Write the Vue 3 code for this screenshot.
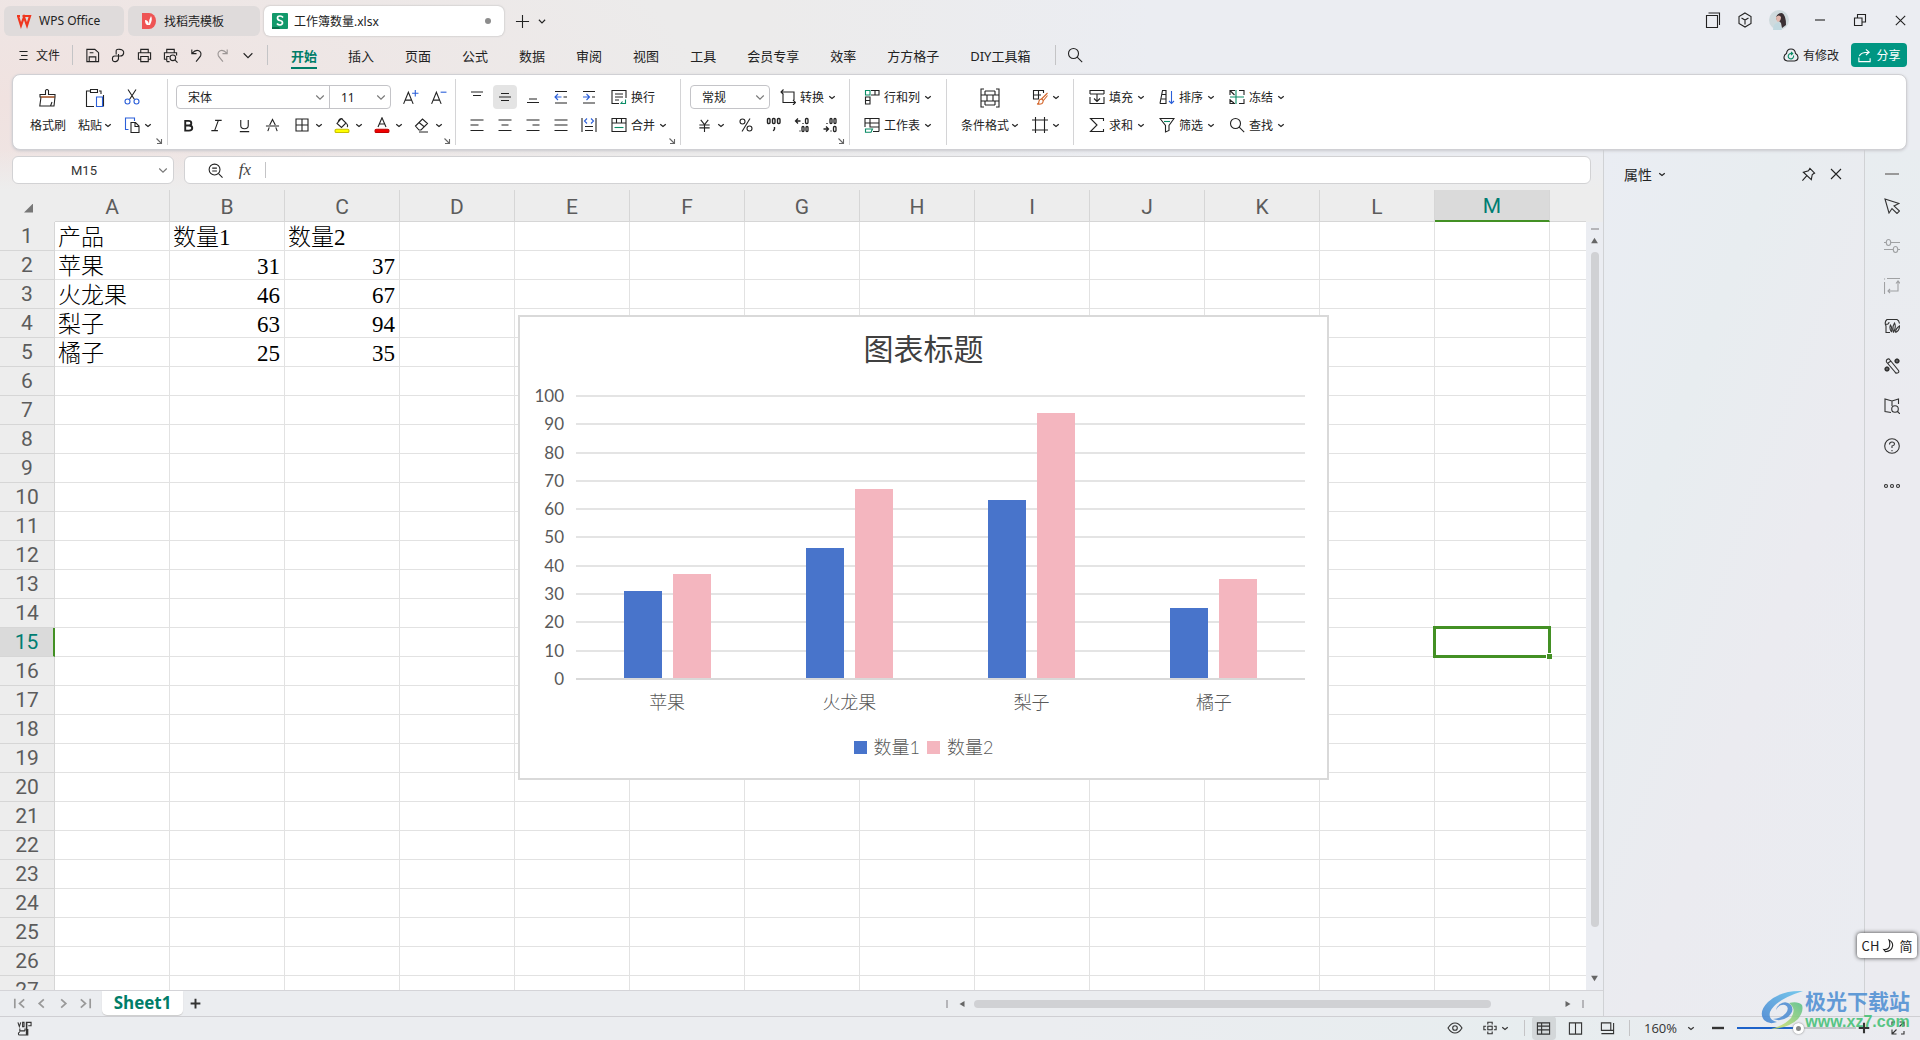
<script setup>
import { h, ref } from 'vue'

const shapes = {
  chevron: '<path d="M2.5 6.5 8 11l5.500-4.500" stroke-width="2.400"/>',
  thinChevron: '<path d="M3 6l5 5 5-5"/>',
  menu: '<path d="M3 3h10M5 8h8M3 13h10"/>',
  save: '<path d="M2 1.500h8.500L14.500 5v9.500h-3V9.500h-7v5H2zM5 5h4M11.500 14.500h-7"/>',
  pdf: '<path d="M5.500 7V3q0-2 4-1.500Q14 2 13.500 5.500 13 9 9 8.500M9 8.500H4Q1.500 8.500 1.500 11.500 1.500 15 5 14.500 8 14 8 11V6.500"/>',
  print: '<path d="M4 5V1.500h8V5M4 12H1.500V5h13v7H12M4 9h8v5.500H4z"/>',
  preview: '<path d="M4 5V1.500h8V5M4 12H1.500V5h13v3M4 14.500h3M4 14.500V9h3"/><circle cx="10.500" cy="10.500" r="3"/><path d="M13 13l2.500 2.500"/>',
  undo: '<path d="M3 1.500v4.500h5M3.500 5.500Q7 1.500 10.500 3q3 1.500 2 5-.5 1.500-5 6.500"/>',
  redo: '<path d="M13 1.500v4.500H8M12.500 5.500Q9 1.500 5.500 3 2.500 4.500 3.500 8q.5 1.500 5 6.500"/>',
  search: '<circle cx="6.500" cy="6.500" r="5"/><path d="M10.200 10.200l5 5"/>',
  plus: '<path d="M8 1v14M1 8h14"/>',
  windows: '<path d="M1.500 3.500h11v12h-11zM3.500 1h11v12"/>',
  cube: '<path d="M8 1l6 3.500v7L8 15l-6-3.500v-7zM4.500 6 8 8l3.500-2M8 8v4.500"/>',
  minimize: '<path d="M3 8h10"/>',
  restore: '<path d="M2.500 6h7.500v7.500H2.500zM5.500 6V2.500H13.500v7.500H10"/>',
  close: '<path d="M3 3l10 10M13 3 3 13"/>',
  cloud: '<path d="M4.500 14Q.7 13.500 1 10q.3-2.500 2.500-3.500Q4 2 8 2t4.500 4.500Q14.700 7.500 15 10q.3 3.500-3.500 4z"/><path stroke="#0a8c66" d="M10.500 8.500A2.700 2.700 0 1 1 8 6.500h1.500M8 5l1.700 1.500L8 8"/>',
  share: '<path d="M2 10v4.500h12V11M2.500 8.500Q4 4.500 12.500 4.500M9.500 1.500l3.500 3-3.500 3"/>',
  brush: '<path d="M2 6.500h5.500V2.500q1.500-2 3 0v4H17V9H2zM3 9 1.800 18H16l1-9M12.500 18l1.500-4"/><path stroke="#d4672c" d="M3 9h13.500"/>',
  paste: '<path d="M5 3H1.500v15.500H9M14 3h2v3M5.500 1.500h7v3h-7zM18.500 18.500V7"/><path stroke="#2b5fd9" d="M11.500 9h6v9.500h-6z"/>',
  cut: '<path d="M4 .5 10.500 10.500M12 .5 5.500 10.500"/><g stroke="#2b5fd9"><circle cx="3.500" cy="12.500" r="2.500"/><circle cx="12.500" cy="12.500" r="2.500"/></g>',
  copy: '<path stroke="#2b5fd9" d="M4.500 12.500h-3V1h9v3"/><path d="M7 5.500h4.500L15 9v6.500H7zM11 5.500v4h4"/>',
  growFont: '<path d="M1.500 14 6 3l4.500 11M3 10.500h6"/><path stroke="#2b5fd9" d="M12.500 1v6M9.500 4h6"/>',
  shrinkFont: '<path d="M1.500 14 6 3l4.500 11M3 10.500h6"/><path stroke="#2b5fd9" d="M10 3h5.500"/>',
  bold: '<path stroke-width="2" d="M4.500 3H8q3 0 3 2.500T8 8H4.500zM4.500 8h4q3.500 0 3.500 2.700T8.500 13.500h-4z"/>',
  italic: '<path d="M6.500 2.500h7M2.500 13.500h7M10 2.500 6 13.500"/>',
  underline: '<path d="M4 2v6q0 3.500 4 3.500T12 8V2M3 14.500h10"/>',
  strike: '<path d="M1 8.500h14M5 7.500 8 1.500l3 6M4.500 10 3 14M11.500 10l1.500 4"/>',
  borders: '<path d="M2 2h12v12H2zM8 2v12M2 8h12"/>',
  fill: '<path d="M7 2 3 6.500 7.500 10.500 12 6 8 2zM4 5.500Q5 1 8.500 1.500M12.500 6.500q2 2.500.5 3.500"/><rect x="1" y="12.200" width="14" height="3.400" rx="1.500" fill="#ffff00" stroke="#c9c000"/>',
  fontColor: '<path d="M4 10 8 .8 12 10M5.500 7h5"/><rect x="1" y="12.200" width="14" height="3.400" rx="1.500" fill="#f00000" stroke="#c00000"/>',
  eraser: '<path d="M1.500 9 8.500 2l5 4.500L7 13H5zM5 5.500l5.500 4.500M5 15h9"/>',
  top: '<path d="M2 3h12M4 6.500h8"/>',
  middle: '<path d="M4 4.500h8M2 8h12M4 11.500h8"/>',
  bottom: '<path d="M4 10h8M2 13.500h12"/>',
  outdent: '<path d="M2 2.500h12M2 14h12M10.500 8h3.500"/><path stroke="#2b5fd9" d="M8.500 8H2M5 5 2 8l3 3"/>',
  indent: '<path d="M2 2.500h12M2 14h12M11 8h3"/><path stroke="#2b5fd9" d="M2 8h6.500M5.500 5l3 3-3 3"/>',
  left: '<path d="M1.500 3h13M1.500 8h8M1.500 13.500h13"/>',
  center: '<path d="M1.500 3h13M4.500 8h7M1.500 13.500h13"/>',
  right: '<path d="M1.500 3h13M7.500 8h7M1.500 13.500h13"/>',
  justify: '<path d="M1.500 3h13M1.500 8h13M1.500 13.500h13"/>',
  distribute: '<path d="M1 1v14M15 1v14M4 9.500h8M4 13.500h8"/><path stroke="#2b5fd9" d="M6 1.500 3.500 4 6 6.500M10 1.500 12.500 4 10 6.500"/>',
  wrap: '<path d="M8 14.500H1V1.500h14V9M4 5h8M4 8h8M4 11h4"/><path stroke="#0a8c66" d="M14.500 10.500v4H10l1.500-2"/>',
  merge: '<path d="M1 1.500h14v13H1zM1 6h14M5.500 1.500V6M10.500 1.500V6"/><path stroke="#0a8c66" d="M3.500 10.500h9"/>',
  convert: '<path d="M3 5V13.500h12M13 11l2.500 2.500L13 16M14 11V3H1M3.500.5 1 3l2.500 2.500"/>',
  yen: '<path d="M4 2 8 7l4-5M2.500 7.500h11M2.500 10.500h11M8 7v8"/>',
  percent: '<circle cx="4.500" cy="4.500" r="2.500"/><circle cx="11.500" cy="11.500" r="2.500"/><path d="M12 1.500 4 14.500"/>',
  thousands: '<g stroke-width="1.400"><rect x="1.500" y="1.500" width="2.500" height="5" rx="1"/><rect x="6.500" y="1.500" width="2.500" height="5" rx="1"/><rect x="11.500" y="1.500" width="2.500" height="5" rx="1"/><path d="M8.500 10v2l-1.200 2"/></g>',
  addDecimal: '<g stroke-width="1.300"><path d="M6.500 4H1.500M4 1.500 1.500 4 4 6.500M9 6v1M6 13.500v1"/><rect x="11.500" y="1.500" width="2.500" height="5" rx="1"/><rect x="8" y="9.500" width="2" height="5" rx="1"/><rect x="12" y="9.500" width="2" height="5" rx="1"/></g>',
  cutDecimal: '<g stroke-width="1.300"><path d="M1.500 12h5M4 9.500 6.500 12 4 14.500M9 13.500v1M5 6v1"/><rect x="11.500" y="9.500" width="2.500" height="5" rx="1"/><rect x="8" y="1.500" width="2" height="5" rx="1"/><rect x="12" y="1.500" width="2" height="5" rx="1"/></g>',
  rowsCols: '<path d="M7 1.500h8V6H7M11 1.500V6M1.500 8h4.500v7H1.500zM1.500 11.500H6"/><path stroke="#0a8c66" d="M1.500 1.500h4.500V6H1.500z"/>',
  worksheet: '<path d="M15 14.500H9M1 10V1.500h14v13M1 6h14M6 1.500v9M6 10h9"/><path stroke="#0a8c66" d="M1.500 12h7L7 15.200H1.500z"/>',
  conditional: '<path d="M4 1H1v18h3M16 1h3v18h-3M1 7h4M1 13h6M15 7h4M13 13h6M5 3h10M5 3v4h10V3M7 7v6M13 7v6M5 17h10M5 17v-4h10v4"/>',
  tableStyle: '<path d="M7 10H1.500V1.500h10V4M1.500 6H9M6.500 1.500V10"/><path stroke="#d4672c" d="M15.500 4 9.500 10M15.500 6.500 11 12M5 15q2 0 2-3 1-2.500 3.500-1.500 1.500 2-.5 4-1.500 1-5 .5z"/>',
  frame: '<path d="M3.500 0v16M12.500 0v16M0 3h16M0 13h16"/>',
  fillDown: '<path d="M5 14.500H1V8M11 14.500h4V8M1 5V1.500h14V5M1 5h14M8 5.500V12M5 9.500 8 12.500l3-3M1 14.500h14"/>',
  sort: '<path d="M1 14.500 3.500 1.500H7v13H1M3 5.500h4M2.500 10H7"/><path stroke="#2b5fd9" d="M12.500 2v12.500M10 12l2.500 2.500L15 12"/>',
  freeze: '<path d="M6 1.500H1V6M10 1.500h5V6M1 10v4.500h5M10 14.500h5V10M1.500 2l4 4M1 11l4 3"/><path stroke="#0a8c66" d="M7 1v14M1 8h14"/>',
  sum: '<path d="M14.500 4V1.500h-13L8 8l-6.500 6.500h13V12"/>',
  filter: '<path d="M1 1.500h14L10 8.500v5L6.500 15V8.500z"/><path stroke="#0a8c66" d="M5 4.500h6"/>',
  launcher: '<path d="M3 3l9 9M13 4v9H4" stroke-width="2.200"/>',
  zoomText: '<circle cx="7" cy="7" r="5.800"/><path d="M11.500 11.500 15.500 15.500M4.500 5.500h5M4.500 8.500h5"/>',
  pin: '<path d="M9.500 1.500 14.500 6.500 12 8l-1 5.500L2.500 5.500 8 4zM6 9.500 1.500 14.500"/>',
  cursor: '<path d="M1 1l14 4.500L10 8l5.500 5L13 15.500 8 10.500 5 15z"/>',
  sliders: '<path d="M0 4.500h2M6.500 4.500H16M0 11.500h9M14 11.500h2"/><ellipse cx="4.500" cy="4.500" rx="2.200" ry="3"/><ellipse cx="11.500" cy="11.500" rx="2.200" ry="3"/>',
  swap: '<path d="M.5 4v12M3 .5h13M14 3.500V13H4M12 5.500l2-2.500 2 2.500M6 11l-2 2 2 2M.5.500v1"/>',
  skin: '<path d="M6 14.500H2V8Q0 4 3 1.500h10q2 1 2.500 4M1 6q4 1 4-2"/><path d="M7.500 14Q5 10 6.500 7 8.500 10 7.500 14M9.500 14.500Q8 9 10.500 5q2 4-1 9.500M11.500 14.500q0-4 4-6.500 0 5-4 6.500"/>',
  wand: '<path d="M3 1.500q2-1.500 3 .5l8.500 10.500q1 2-1 2.500T11 14L2.500 4Q2 2.500 3 1.500zM4 5l3-2"/><circle cx="13" cy="3" r="1.700" stroke-width="1.600"/><circle cx="3" cy="11" r="1.700" stroke-width="1.600"/><path d="M13 .5v5M10.500 3h5M3 8.500v5M.5 11h5" stroke-width=".8"/>',
  book: '<path d="M7 14.500 1 13.500V1l7 2 6.500-2v5M8 3v5"/><circle cx="11" cy="11" r="3.300"/><path d="M13.500 13.500 16 16"/>',
  help: '<circle cx="8" cy="8" r="7.300"/><path d="M5.500 6.500q0-2.500 2.500-2.500t2.500 2Q10.500 7.500 8 8v2M8 12v1.300"/>',
  more: '<circle cx="2" cy="8" r="1.500"/><circle cx="8" cy="8" r="1.500"/><circle cx="14" cy="8" r="1.500"/>',
  first: '<path d="M3 3v10M13 3.500 8 8l5 4.500" stroke-width="1.800"/>',
  prev: '<path d="M10.500 3.500 5.500 8l5 4.500" stroke-width="1.800"/>',
  next: '<path d="M5.500 3.500l5 4.500-5 4.500" stroke-width="1.800"/>',
  last: '<path d="M13 3v10M3 3.500 8 8l-5 4.500" stroke-width="1.800"/>',
  script: '<path d="M1 1.500 2.500 6 4 1.500M6 1.500h1.500v4.500H6zM10 15V1.500h5V5h-3M10.500 1.500V14M2.500 10.500h6M3 8v3.500M3 12q-1.500 0-1.500 1.500T3 15h8.500V8.500M8.500 8v2.500"/>',
  eye: '<path d="M1 8Q4 3 8 3t7 5q-3 5-7 5T1 8z"/><circle cx="8" cy="8" r="2.300"/>',
  cross: '<rect x="5.500" y="6" width="5" height="4"/><path d="M5.500 4V1.500h5V4M5.500 12v2.500h5V12M3.500 6H1v4h2.500M12.500 6H15v4h-2.500"/>',
  grid: '<path d="M1.500 2h13v12h-13zM1.500 5.500h13M1.500 9.500h13M6 2v12"/>',
  pages: '<path d="M1.500 2h13v12h-13zM8 2v12"/>',
  pageBreak: '<path d="M1.500 2h10v8h-10zM14.500 2v11.500H1.500M11.500 10h3"/>',
  minus: '<path d="M2 8h12" stroke-width="2.400"/>',
  boldPlus: '<path d="M8 2v12M2 8h12" stroke-width="2.400"/>',
  expand: '<path d="M9.500 2H14v4.500M14 2 9.500 6.500M6.500 14H2V9.500M2 14l4.500-4.500M2 5V2h3M14 11v3h-3"/>',
  moon: '<path d="M8 1q5 3 4 7.500Q11 14 4 14.500L2 12q5 .5 6.500-3.500Q9.500 5 8 1z"/>',
  triangle: '<path d="M8 3l6 10H2z" fill="currentColor" stroke="none"/>',
}
const Icon = ({ name, size = 16, box = 16 }) =>
  h('svg', {
    class: 'icon', width: size, height: size, viewBox: `0 0 ${box} ${box}`,
    fill: 'none', stroke: 'currentColor', 'stroke-width': box / size * 1.1,
    'aria-hidden': 'true', innerHTML: shapes[name],
  })
Icon.props = ['name', 'size', 'box']

const quick = ['save', 'pdf', 'print', 'preview', 'undo', 'redo', 'thinChevron']
const menus = ['开始', '插入', '页面', '公式', '数据', '审阅', '视图', '工具', '会员专享', '效率', '方方格子', 'DIY工具箱']
const railIcons = ['cursor', 'sliders', 'swap', 'skin', 'wand', 'book', 'help', 'more']
const columns = ['A', 'B', 'C', 'D', 'E', 'F', 'G', 'H', 'I', 'J', 'K', 'L', 'M']
const editTools = [
  [['fillDown', '填充'], ['sum', '求和']],
  [['sort', '排序'], ['filter', '筛选']],
  [['freeze', '冻结'], ['search', '查找']],
]
const series = ['数量1', '数量2']
const data = [
  { name: '苹果', values: [31, 37] },
  { name: '火龙果', values: [46, 67] },
  { name: '梨子', values: [63, 94] },
  { name: '橘子', values: [25, 35] },
]
const cells = [['产品', ...series], ...data.map((d) => [d.name, ...d.values])]
const ticks = [100, 90, 80, 70, 60, 50, 40, 30, 20, 10, 0]
const zoom = ref(52)
</script>

<template>
  <div class="app">
    <header class="titlebar">
      <button class="doc home">
        <svg class="icon" width="16" height="16" viewBox="0 0 16 16" fill="none" stroke="#f0371f" stroke-width="2.200"><path d="M1 3h3M2 3l3 9.500L8 4l3 8.500L14 3H6.500" /></svg>
        WPS Office
      </button>
      <button class="doc template">
        <svg class="icon" width="16" height="16" viewBox="0 0 16 16"><path d="M1 0h7a7 8 0 0 1 0 16H1z" fill="#ee5454" /><path d="M4 7q3 0 4 4 0-5 2-8 2 3-1 9H6q-2-1-2-5z" fill="#fff" /></svg>
        找稻壳模板
      </button>
      <button class="doc current">
        <svg class="icon" width="16" height="16" viewBox="0 0 16 16"><rect width="16" height="16" rx="1" fill="#12996b" /><path d="M0 14h7l1 2H0z" fill="#06704b" /><path d="M11 4.500Q10 3 8 3 5.500 3 5.500 5T8 7.500t2.500 2.300T8 12Q6 12 5 10.500" stroke="#fff" stroke-width="1.700" fill="none" /></svg>
        <span>工作簿数量.xlsx</span>
        <i class="unsaved"></i>
      </button>
      <button class="plain" aria-label="新建"><Icon name="plus" :size="15" /></button>
      <button class="plain slim" aria-label="标签列表"><Icon name="thinChevron" :size="10" /></button>
      <div class="window-tools">
        <button class="plain" aria-label="窗口"><Icon name="windows" /></button>
        <button class="plain" aria-label="应用"><Icon name="cube" /></button>
        <svg class="avatar" width="20" height="20" viewBox="0 0 20 20"><circle cx="10" cy="10" r="10" fill="#cfdadd" /><path d="M7 9q0-6 6-6 4 2 4 12l-4 3-1-5-2-2z" fill="#3a3034" /><path d="M7 7q3-3 5 0 0 4-3 5-2-1-2-5z" fill="#e2b8ad" /><path d="M4 20q0-7 6-8l3 8z" fill="#c2d9e0" /></svg>
        <button class="plain wide" aria-label="最小化"><Icon name="minimize" /></button>
        <button class="plain wide" aria-label="还原"><Icon name="restore" /></button>
        <button class="plain wide" aria-label="关闭"><Icon name="close" :size="15" /></button>
      </div>
    </header>

    <nav class="menubar">
      <button class="file"><Icon name="menu" :size="13" />文件</button>
      <i class="rule"></i>
      <div class="quick">
        <button v-for="q in quick" :key="q" class="plain" :class="{ faded: q === 'redo' }" :aria-label="q"><Icon :name="q" :size="q === 'thinChevron' ? 14 : 15" /></button>
      </div>
      <i class="rule"></i>
      <div class="menus">
        <a v-for="(m, i) in menus" :key="m" href="#" :class="{ on: i === 0 }">{{ m }}</a>
      </div>
      <i class="rule"></i>
      <button class="plain find" aria-label="搜索"><Icon name="search" /></button>
      <div class="menu-end">
        <button class="sync"><Icon name="cloud" />有修改</button>
        <button class="share"><Icon name="share" :size="15" />分享</button>
      </div>
    </nav>

    <section class="ribbon">
      <div class="group clipboard">
        <button class="big"><Icon name="brush" :size="20" :box="20" /><span>格式刷</span></button>
        <button class="big"><Icon name="paste" :size="20" :box="20" /><span>粘贴<Icon name="chevron" :size="8" /></span></button>
        <div class="stack">
          <button class="tool cut" aria-label="剪切"><Icon name="cut" /></button>
          <button class="label" aria-label="复制"><Icon name="copy" /><Icon name="chevron" :size="8" /></button>
        </div>
        <Icon class="launcher" name="launcher" :size="8" />
      </div>

      <div class="group font">
        <div class="stack">
          <div class="line">
            <div class="combo">
              <span class="pick family"><select aria-label="字体"><option>宋体</option></select><Icon name="thinChevron" :size="12" /></span>
              <span class="pick size"><select aria-label="字号"><option>11</option></select><Icon name="thinChevron" :size="12" /></span>
            </div>
            <button class="tool" aria-label="增大字号"><Icon name="growFont" :size="17" /></button>
            <button class="tool" aria-label="减小字号"><Icon name="shrinkFont" :size="17" /></button>
          </div>
          <div class="line">
            <button v-for="t in ['bold', 'italic', 'underline', 'strike']" :key="t" class="tool" :aria-label="t"><Icon :name="t" :size="15" /></button>
            <button v-for="t in ['borders', 'fill', 'fontColor', 'eraser']" :key="t" class="split" :aria-label="t"><Icon :name="t" /><Icon name="chevron" :size="8" /></button>
          </div>
        </div>
        <Icon class="launcher" name="launcher" :size="8" />
      </div>

      <div class="group align">
        <div class="stack">
          <div class="line">
            <button v-for="t in ['top', 'middle', 'bottom', 'outdent', 'indent']" :key="t" class="tool" :class="{ pressed: t === 'middle' }" :aria-label="t"><Icon :name="t" /></button>
            <button class="label"><Icon name="wrap" />换行</button>
          </div>
          <div class="line">
            <button v-for="t in ['left', 'center', 'right', 'justify', 'distribute']" :key="t" class="tool" :aria-label="t"><Icon :name="t" /></button>
            <button class="label"><Icon name="merge" />合并<Icon name="chevron" :size="8" /></button>
          </div>
        </div>
        <Icon class="launcher" name="launcher" :size="8" />
      </div>

      <div class="group number">
        <div class="stack">
          <div class="line">
            <div class="combo"><span class="pick format"><select aria-label="数字格式"><option>常规</option></select><Icon name="thinChevron" :size="12" /></span></div>
            <button class="label"><Icon name="convert" />转换<Icon name="chevron" :size="8" /></button>
          </div>
          <div class="line">
            <button class="split currency" aria-label="货币"><Icon name="yen" :size="15" /><Icon name="chevron" :size="8" /></button>
            <button v-for="t in ['percent', 'thousands', 'addDecimal', 'cutDecimal']" :key="t" class="tool" :aria-label="t"><Icon :name="t" /></button>
          </div>
        </div>
        <Icon class="launcher" name="launcher" :size="8" />
      </div>

      <div class="group cells">
        <div class="stack">
          <button class="label"><Icon name="rowsCols" />行和列<Icon name="chevron" :size="8" /></button>
          <button class="label"><Icon name="worksheet" />工作表<Icon name="chevron" :size="8" /></button>
        </div>
      </div>

      <div class="group styles">
        <button class="big"><Icon name="conditional" :size="20" :box="20" /><span>条件格式<Icon name="chevron" :size="8" /></span></button>
        <div class="stack">
          <button class="label" aria-label="表格样式"><Icon name="tableStyle" /><Icon name="chevron" :size="8" /></button>
          <button class="label" aria-label="单元格样式"><Icon name="frame" /><Icon name="chevron" :size="8" /></button>
        </div>
      </div>

      <div class="group edit">
        <div v-for="(col, i) in editTools" :key="i" class="stack">
          <button v-for="[icon, text] in col" :key="text" class="label"><Icon :name="icon" />{{ text }}<Icon name="chevron" :size="8" /></button>
        </div>
      </div>
    </section>

    <div class="work">
      <main class="book">
        <div class="formula">
          <div class="field name"><input value="M15" aria-label="名称框"><button class="plain slim" aria-label="名称列表"><Icon name="thinChevron" :size="12" /></button></div>
          <div class="field entry">
            <button class="plain" aria-label="缩放"><Icon name="zoomText" :size="15" /></button>
            <button class="plain fx" aria-label="插入函数"><i>fx</i></button>
            <i class="rule"></i>
            <input value="" aria-label="编辑栏">
          </div>
        </div>

        <div class="sheet">
          <div class="viewport">
            <table>
              <colgroup><col class="c-head"><col v-for="c in columns" :key="c" class="c-cell"><col></colgroup>
              <thead>
                <tr>
                  <th class="corner"><i></i></th>
                  <th v-for="c in columns" :key="c" :class="{ picked: c === 'M' }">{{ c }}</th>
                  <th></th>
                </tr>
              </thead>
              <tbody>
                <tr v-for="r in 27" :key="r">
                  <th :class="{ picked: r === 15 }">{{ r }}</th>
                  <td v-for="(c, i) in columns" :key="c" :class="{ num: r > 1 && i > 0 }">{{ cells[r - 1]?.[i] }}<i v-if="r === 15 && c === 'M'" class="selection"></i></td>
                  <td></td>
                </tr>
              </tbody>
            </table>

            <figure class="chart">
              <figcaption>图表标题</figcaption>
              <div class="plot-row">
                <div class="axis"><span v-for="t in ticks" :key="t">{{ t }}</span></div>
                <div class="plot">
                  <div class="lines"><i v-for="t in ticks" :key="t"></i></div>
                  <div class="bars">
                    <div v-for="d in data" :key="d.name" class="pair">
                      <b v-for="(v, i) in d.values" :key="i" :class="'s' + i" :style="{ height: v + '%' }"></b>
                    </div>
                  </div>
                </div>
              </div>
              <div class="categories"><span v-for="d in data" :key="d.name">{{ d.name }}</span></div>
              <div class="legend"><span v-for="(s, i) in series" :key="s"><b :class="'s' + i"></b>{{ s }}</span></div>
            </figure>
          </div>
          <div class="vscroll">
            <i class="grip"></i>
            <Icon name="triangle" :size="9" />
            <div class="vtrack"><i></i></div>
            <Icon class="down" name="triangle" :size="9" />
          </div>
        </div>

        <div class="tabs">
          <div class="pager">
            <button v-for="p in ['first', 'prev', 'next', 'last']" :key="p" class="plain" :aria-label="p"><Icon :name="p" :size="15" /></button>
          </div>
          <button class="sheet-tab">Sheet1</button>
          <button class="plain add" aria-label="新建工作表"><Icon name="boldPlus" :size="13" /></button>
          <div class="hscroll">
            <i class="grip"></i>
            <Icon class="west" name="triangle" :size="8" />
            <div class="htrack"><i></i></div>
            <Icon class="east" name="triangle" :size="8" />
            <i class="grip"></i>
          </div>
        </div>
      </main>

      <aside class="pane">
        <button class="pane-title">属性<Icon name="chevron" :size="8" /></button>
        <button class="plain" aria-label="固定"><Icon name="pin" :size="15" /></button>
        <button class="plain" aria-label="关闭"><Icon name="close" /></button>
      </aside>
      <aside class="rail">
        <button class="plain handle" aria-label="收起"><i></i></button>
        <button v-for="r in railIcons" :key="r" class="plain" :class="{ faded: r === 'sliders' || r === 'swap' }" :aria-label="r"><Icon :name="r" /></button>
      </aside>
    </div>

    <footer class="status">
      <button class="plain macro" aria-label="宏"><Icon name="script" :size="15" /></button>
      <button class="plain" aria-label="护眼"><Icon name="eye" /></button>
      <button class="label" aria-label="阅读模式"><Icon name="cross" :size="14" /><Icon name="chevron" :size="8" /></button>
      <i class="rule"></i>
      <div class="views">
        <button class="plain active" aria-label="普通视图"><Icon name="grid" :size="15" /></button>
        <button class="plain" aria-label="页面布局"><Icon name="pages" :size="15" /></button>
        <button class="plain" aria-label="分页预览"><Icon name="pageBreak" :size="15" /></button>
      </div>
      <i class="rule"></i>
      <button class="percent">160%<Icon name="chevron" :size="8" /></button>
      <button class="plain slim" aria-label="缩小"><Icon name="minus" /></button>
      <input v-model="zoom" class="zoom" type="range" aria-label="缩放比例">
      <button class="plain slim" aria-label="放大"><Icon name="boldPlus" :size="14" /></button>
      <button class="plain full" aria-label="全屏"><Icon name="expand" /></button>
    </footer>

    <div class="ime">CH <Icon name="moon" :size="14" /> 简</div>
    <div class="mark">
      <svg width="43" height="40" viewBox="0 0 43 40">
        <defs>
          <linearGradient id="sky" x1="0" y1="1" x2="1" y2="0"><stop offset="0" stop-color="#3f7fd0" /><stop offset="1" stop-color="#63c3ec" /></linearGradient>
          <linearGradient id="leaf" x1="0" y1="1" x2="1" y2="0"><stop offset="0" stop-color="#dbe36a" /><stop offset="1" stop-color="#52bf86" /></linearGradient>
        </defs>
        <path d="M42 1Q20 0 7 12-3 22 3 30q5 5 13 2-9-2-7-10Q14 10 42 1z" fill="url(#sky)" />
        <path d="M15 20q3-6 9-5 5 2 1 8-5 6-13 6 8 3 15-2 7-6 3-12-5-5-11-1-3 2-4 6z" fill="#4b8bd2" />
        <path d="M28 13q9-2 13 2 2 6-4 14-9 9-27 10 14-4 20-11 6-9-2-15z" fill="url(#leaf)" />
      </svg>
      <div><strong>极光下载站</strong><span>www.xz7.com</span></div>
    </div>
  </div>
</template>

<style>
body { margin: 0; }
</style>

<style scoped>
.app {
  position: relative;
  display: flex;
  flex-direction: column;
  height: 100vh;
  overflow: hidden;
  font: 12px "Noto Sans", "Noto Sans CJK SC", sans-serif;
  color: #222;
  background:
    radial-gradient(ellipse 700px 260px at 0 100px, #f0e2e0, transparent),
    linear-gradient(90deg, #ecebeb 40%, #ebedf2 60%);
}
.app *, .app { box-sizing: border-box; }
.icon { flex: none; display: block; }
button { padding: 0; border: 0; background: none; font: inherit; color: inherit; white-space: nowrap; }
input, select { min-width: 0; padding: 0; border: 0; outline: 0; background: none; font: inherit; color: inherit; }
.plain { display: flex; align-items: center; justify-content: center; width: 26px; height: 24px; }
.plain.slim { width: 16px; }
.faded { opacity: .4; }
.rule { flex: none; width: 1px; height: 16px; background: #c4c4c6; }

.titlebar { display: flex; align-items: center; gap: 4px; height: 40px; padding: 2px 0 0 4px; }
.doc { display: flex; align-items: center; gap: 7px; height: 30px; padding-bottom: 1px; border-radius: 6px; background: #dfdbdb; text-align: left; }
.home { width: 120px; padding-left: 12px; }
.template { width: 132px; padding-left: 13px; }
.current { width: 240px; padding: 0 13px 1px 8px; gap: 6px; background: #fff; box-shadow: 0 0 2px #aaa; }
.unsaved { width: 6px; height: 6px; margin-left: auto; border-radius: 50%; background: #8c8c8c; }
.titlebar > .plain { margin-left: 1px; }
.titlebar > .slim { margin-left: -5px; }
.window-tools { display: flex; align-items: center; gap: 6px; margin-left: auto; padding-bottom: 2px; }
.window-tools .wide { width: 40px; margin-right: -6px; }
.window-tools .plain:nth-child(4) { margin-left: 5px; }
.window-tools .plain:last-child { margin-right: 0; }
.avatar { margin: 0 0 0 5px; }

.menubar { display: flex; align-items: center; height: 34px; padding: 0 13px 4px 17px; }
.menubar .rule { height: 20px; background: #c4c4c6; }
.file { display: flex; align-items: center; gap: 6px; margin-right: 12px; }
.quick { display: flex; margin: 0 6px; }
.menus { display: flex; gap: 31px; margin: 0 25px 0 23px; font-size: 13px; line-height: 20px; }
.menus a { padding: 4px 0 1px; border-bottom: 2px solid transparent; color: #222; text-decoration: none; }
.menus .on { border-color: #007d68; color: #007d68; font-weight: 700; }
.find { margin-left: 6px; }
.menu-end { display: flex; align-items: center; gap: 12px; margin-left: auto; }
.sync, .share { display: flex; align-items: center; gap: 4px; }
.share { width: 56px; height: 24px; justify-content: center; border-radius: 4px; background: #009682; color: #fff; }

.ribbon { display: flex; height: 76px; margin: 0 13px 0 12px; padding: 4px 0; border: 1px solid #d0d0d4; border-radius: 8px; background: #fff; box-shadow: 0 1px 3px #c9c9ce; z-index: 1; }
.group { position: relative; display: flex; flex: none; padding-top: 4px; border-right: 1px solid #d4d4d6; }
.group .launcher { position: absolute; right: 4px; bottom: 0; color: #666; }
.stack { display: flex; flex-direction: column; }
.line { display: flex; }
.line, .stack > button { height: 28px; align-items: center; }
.tool { display: flex; align-items: center; justify-content: center; width: 28px; height: 24px; }
.pressed { width: 24px; margin: 0 2px; border-radius: 4px; background: #e4e4e4; }
.split { display: flex; align-items: center; gap: 5px; width: 40px; height: 24px; padding-left: 8px; }
.label { display: flex; align-items: center; gap: 4px; }
.big { display: flex; flex-direction: column; align-items: center; height: 56px; }
.big > .icon { margin: 5px 0 3px; }
.big span { display: flex; align-items: center; gap: 2px; height: 28px; }
.clipboard { width: 155px; gap: 12px; padding-left: 17px; }
.cut { width: 16px; }
.font { width: 288px; padding-left: 6px; }
.font .combo { margin: 0 5px 0 2px; }
.align { width: 225px; padding-left: 7px; }
.align .label { padding-left: 8px; }
.number { width: 169px; padding-left: 9px; }
.number .combo { margin-right: 10px; }
.currency { width: 42px; padding-left: 7px; }
.cells { width: 97px; padding-left: 14px; }
.styles { width: 127px; padding-left: 14px; gap: 13px; }
.edit { padding-left: 15px; gap: 14px; border: 0; }
.combo { display: flex; height: 24px; border: 1px solid #c4c4c8; border-radius: 4px; }
.pick { position: relative; }
.pick select { width: 100%; height: 100%; padding-left: 11px; appearance: none; }
.pick .icon { position: absolute; right: 3px; top: 5px; color: #777; pointer-events: none; }
.family { width: 152px; }
.size { width: 61px; border-left: 1px solid #c4c4c8; }
.format { width: 78px; }

.work { display: flex; flex: 1; min-height: 0; }
.book { display: flex; flex: 1; flex-direction: column; min-width: 0; }
.formula { display: flex; gap: 10px; height: 40px; padding: 6px 12px; background: linear-gradient(transparent, #ededed); }
.field { display: flex; align-items: center; height: 28px; border: 1px solid #d2d2d4; border-radius: 6px; background: #fff; }
.name { width: 162px; padding-right: 2px; }
.name input { width: 142px; text-align: center; font-family: Roboto, sans-serif; font-size: 13px; color: #333; }
.name .icon { color: #777; }
.entry { flex: 1; padding-left: 17px; }
.entry .fx { width: 34px; font: 17px/24px "Liberation Serif", serif; color: #444; }
.entry .rule { margin: 0 8px 0 3px; }
.entry input { flex: 1; }

.sheet { display: flex; flex: 1; min-height: 0; }
.viewport { position: relative; flex: 1; min-width: 0; overflow: hidden; background: #fff; }
table { width: 100%; table-layout: fixed; border-collapse: separate; border-spacing: 0; }
.c-head { width: 55px; }
.c-cell { width: 115px; }
th { padding: 0; border-right: 1px solid #d6d6d6; border-bottom: 1px solid #d6d6d6; background: #ededed; color: #5c5c5c; font: 21px/28px Roboto, sans-serif; }
thead th { height: 32px; padding-top: 2px; }
thead th:first-child { border: 0; }
thead th:last-child { border-right: 0; }
.corner i { display: block; width: 9px; height: 9px; margin: 2px 0 0 24px; background: #777; clip-path: polygon(100% 0, 100% 100%, 0 100%); }
th.picked { background: #dadada; color: #007d72; }
thead .picked { border-bottom: 2px solid #439024; }
tbody .picked { border-right: 2px solid #439024; }
td { position: relative; height: 29px; padding: 3px 4px 0 3px; border-right: 1px solid #e2e2e2; border-bottom: 1px solid #e2e2e2; color: #000; font: 23px/25px "Liberation Serif", "Noto Sans CJK SC", serif; font-weight: 300; white-space: nowrap; }
td:last-child { border-right: 0; }
.num { text-align: right; }
.selection { position: absolute; inset: -2px; border: 3px solid #439024; z-index: 1; }
.selection::after { content: ""; position: absolute; right: -4px; bottom: -4px; width: 5px; height: 5px; border: 1px solid #fff; border-width: 1px 0 0 1px; background: #439024; }

.chart { position: absolute; left: 518px; top: 125px; width: 811px; margin: 0; padding-bottom: 18px; border: 2px solid #d9d9d9; background: #fff; color: #595959; font: 18px/26px Lato, "Noto Sans CJK SC", sans-serif; font-weight: 300; }
.chart figcaption { height: 62px; font-size: 30px; font-weight: 400; line-height: 62px; text-align: center; color: #404040; }
.plot-row { display: flex; height: 303px; margin-top: 7px; padding-right: 22px; }
.axis { display: flex; flex-direction: column; justify-content: space-between; width: 44px; margin-right: 12px; text-align: right; font: 17px/20px Lato, sans-serif; }
.plot { display: grid; flex: 1; padding: 9px 0; }
.lines, .bars { grid-area: 1 / 1; display: flex; }
.lines { flex-direction: column; justify-content: space-between; }
.lines i { height: 2px; background: #e4e4e4; }
.lines i:last-child { background: #d9d9d9; }
.bars { padding: 1px 0 2px; }
.pair { display: flex; flex: 1; align-items: flex-end; justify-content: center; gap: 11px; }
.pair b { width: 38px; }
.s0 { background: #4874cb; }
.s1 { background: #f4b6bf; }
.categories { display: flex; padding: 0 22px 0 56px; }
.categories span { flex: 1; text-align: center; }
.legend { display: flex; justify-content: center; gap: 7px; margin-top: 19px; }
.legend span { display: flex; align-items: center; gap: 7px; }
.legend b { width: 13px; height: 13px; }

.vscroll { display: flex; flex-direction: column; align-items: center; width: 17px; padding: 6px 0 7px; border-top: 32px solid #ededed; background: #ebedf2; color: #666; }
.vscroll .grip { width: 8px; height: 2px; margin-bottom: 6px; background: #b5b5b9; }
.vtrack { flex: 1; width: 8px; margin: 7px 0 4px; }
.vtrack i { display: block; height: 94%; border-radius: 4px; background: #d0d1d4; }
.down { transform: rotate(180deg); }

.tabs { display: flex; align-items: center; height: 27px; border-top: 1px solid #d4d4d8; border-bottom: 1px solid #cfcfd3; background: #ebedf0; }
.pager { display: flex; gap: 2px; width: 102px; padding-left: 9px; color: #999; }
.pager .plain { width: 20px; }
.sheet-tab { align-self: flex-start; width: 81px; height: 24px; border-radius: 0 0 5px 5px; background: #fff; color: #007d68; font: 700 17px/24px "Open Sans", sans-serif; box-shadow: 0 1px 1px #ccc; }
.plain.add { width: 24px; color: #333; }
.hscroll { display: flex; align-items: center; width: 41%; height: 25px; margin-left: auto; padding-right: 19px; color: #666; }
.hscroll .grip { width: 2px; height: 8px; background: #b5b5b9; }
.htrack { flex: 1; height: 8px; margin: 0 9px 0 8px; }
.htrack i { display: block; width: 89%; height: 8px; border-radius: 4px; background: #d0d1d4; }
.west { margin-left: 10px; transform: rotate(-90deg); }
.east { margin-right: 10px; transform: rotate(90deg); }

.pane { display: flex; align-items: flex-start; width: 262px; padding: 12px 14px 0 20px; border: 1px solid #d0d2d5; border-top: 0; border-bottom-color: #cfcfd3; background: linear-gradient(110deg, #eaedf3, #e8edf0 30%, #ebebf0 60%, #eaecf1); }
.pane-title { display: flex; align-items: center; gap: 6px; height: 24px; margin-right: auto; font-size: 14px; }
.pane .plain { width: 28px; }
.rail { display: flex; flex-direction: column; gap: 16px; align-items: center; width: 55px; border-bottom: 1px solid #cfcfd3; padding: 20px 1px 0 0; background: linear-gradient(#e8edf0, #ebebf0 30%); color: #333; }
.plain.handle { height: 8px; }
.handle i { width: 14px; height: 2px; background: #999; }

.status { display: flex; align-items: center; height: 23px; padding: 0 0 1px 11px; background: linear-gradient(90deg, #ebedf0 55%, #e7edef 80%, #ebebf0); color: #333; }
.macro { margin-right: auto; }
.status > .label { margin-left: 15px; }
.status > .rule { margin: 0 7px 0 15px; }
.views { display: flex; gap: 8px; }
.views .plain { width: 24px; }
.views + .rule.rule { margin: 0 14px 0 9px; }
.views .active { border-radius: 4px; background: #d3d7d9; }
.percent { display: flex; align-items: center; gap: 10px; margin-right: 15px; font: 13px "Open Sans", sans-serif; }
.zoom { width: 119px; height: 16px; margin: 0 0 0 11px; appearance: none; background: linear-gradient(90deg, #1d62c9 50%, #c4c6c9 50%) center / 100% 2px no-repeat; }
.zoom::-webkit-slider-thumb { appearance: none; width: 11px; height: 11px; border: 3px solid #fff; border-radius: 50%; background: #888; box-shadow: 0 0 2px #777; }
.full { margin: 0 9px 0 13px; }

.ime { position: absolute; right: 3px; bottom: 82px; display: flex; align-items: center; justify-content: center; gap: 3px; width: 60px; height: 25px; border-radius: 4px; background: #fff; box-shadow: 0 0 4px #333; font: 13px "Noto Sans CJK SC", sans-serif; z-index: 2; }
.mark { position: absolute; right: 10px; bottom: 8px; display: flex; align-items: center; gap: 1px; z-index: 2; opacity: .85; pointer-events: none; }
.mark div { display: flex; flex-direction: column; align-items: center; }
.mark strong { color: #4a8cd2; font: 700 21px/24px "Noto Sans CJK SC", sans-serif; }
.mark span { color: #3fbf72; font: 700 16px/20px "Liberation Sans", sans-serif; }
</style>
